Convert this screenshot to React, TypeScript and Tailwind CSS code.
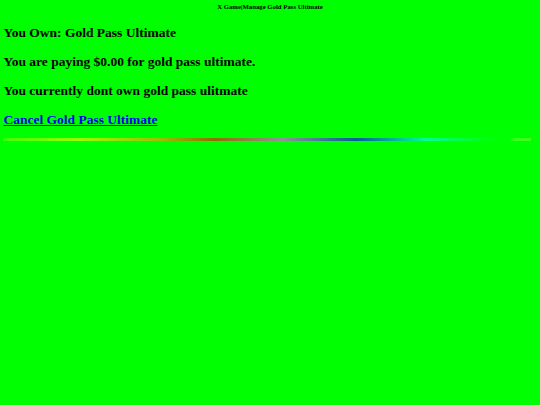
export default function App() {
  return (
    <div className="min-h-[405px] bg-[#00ff00] p-[3.4px] text-black font-['Liberation_Serif',serif] font-bold">
      <div className="text-center text-[6.75px] leading-[7.8px]">X Game|Manage Gold Pass Ultimate</div>
      <div className="flex flex-col gap-[13.5px] mt-[13.5px] text-[13.5px] leading-[15.5px]">
        <p>You Own: Gold Pass Ultimate</p>
        <p>You are paying $0.00 for gold pass ultimate.</p>
        <p>You currently dont own gold pass ulitmate</p>
        <p>
          <a href="#" className="text-[#0000ee] underline">
            Cancel Gold Pass Ultimate
          </a>
        </p>
      </div>
      <div className="mt-[11px] h-[3px] w-[528px] bg-[linear-gradient(to_right,rgba(255,255,0,0.25)_0%,rgba(255,255,0,0.6)_14%,rgba(255,150,0,0.6)_30%,rgba(220,30,0,0.65)_40%,rgba(220,90,230,0.65)_53%,rgba(0,40,200,0.75)_67%,rgba(0,255,255,0.6)_80%,rgba(0,255,128,0.15)_91%,rgba(0,255,0,0)_96%,rgba(200,255,100,0.3)_97%,rgba(200,255,100,0.3)_100%)]" />
    </div>
  );
}
